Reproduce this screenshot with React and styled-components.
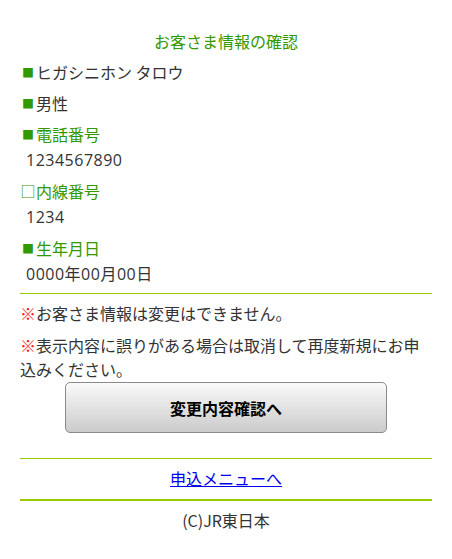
import React from 'react';
import styled, { createGlobalStyle } from 'styled-components';

const GlobalStyle = createGlobalStyle`
  body {
    margin: 0;
    background: #ffffff;
    font-family: "Noto Sans CJK JP", "Noto Sans", sans-serif;
    color: #333333;
  }
`

const Page = styled.div`
  width: 452px;
  padding: 30px 20px 0;
  box-sizing: border-box;
`

const Title = styled.h1`
  margin: 0 0 1px;
  font-size: 16px;
  font-weight: normal;
  line-height: 23px;
  text-align: center;
  color: #339900;
`

const Item = styled.div`
  margin-top: 7px;
`

const Label = styled.div`
  font-size: 16px;
  line-height: 24px;
  color: ${props => (props.green ? '#339900' : '#333333')};
`

const Bullet = styled.span`
  display: inline-block;
  width: 16px;
  font-size: ${props => (props.open ? '15px' : '12px')};
  line-height: 1;
  text-align: center;
  vertical-align: 1px;
  color: #339900;
`

const Value = styled.div`
  margin-top: 2px;
  padding-left: 6px;
  font-family: "Open Sans", "Noto Sans CJK JP", sans-serif;
  font-size: 16px;
  line-height: 24px;
  letter-spacing: 0.5px;
  color: #333333;
`

const Rule = styled.hr`
  margin: ${props => props.margin || '0'};
  border: none;
  height: ${props => props.thick ? '2px' : '1px'};
  background: #99cc00;
`

const Note = styled.p`
  margin: ${props => props.first ? '7px' : '8px'} 0 0;
  font-size: 16px;
  line-height: 24px;
  color: #333333;
`

const Mark = styled.span`
  color: #ff2222;
`

const ButtonRow = styled.div`
  display: flex;
  justify-content: center;
  margin-top: 1px;
`

const Button = styled.button`
  width: 322px;
  height: 51px;
  border: 1px solid #8a8a8a;
  border-radius: 5px;
  background: linear-gradient(#fafafa, #cbcbcb);
  font-family: "Noto Sans CJK JP", sans-serif;
  font-size: 16px;
  font-weight: bold;
  color: #000000;
`

const LinkRow = styled.div`
  margin-top: 7px;
  text-align: center;
  font-size: 16px;
  line-height: 24px;
`

const MenuLink = styled.a`
  color: #0000ee;
  text-decoration: underline;
`

const Footer = styled.div`
  margin-top: 7px;
  text-align: center;
  font-size: 16px;
  line-height: 24px;
  color: #333333;
`

const App = () => {
  return (
    <>
      <GlobalStyle />
      <Page>
        <Title>お客さま情報の確認</Title>
        <Item>
          <Label><Bullet>■</Bullet>ヒガシニホン タロウ</Label>
        </Item>
        <Item>
          <Label><Bullet>■</Bullet>男性</Label>
        </Item>
        <Item>
          <Label green><Bullet>■</Bullet>電話番号</Label>
          <Value>1234567890</Value>
        </Item>
        <Item>
          <Label green><Bullet open>□</Bullet>内線番号</Label>
          <Value>1234</Value>
        </Item>
        <Item>
          <Label green><Bullet>■</Bullet>生年月日</Label>
          <Value>0000年00月00日</Value>
        </Item>
        <Rule margin="7px 0 0" />
        <Note first><Mark>※</Mark>お客さま情報は変更はできません。</Note>
        <Note><Mark>※</Mark>表示内容に誤りがある場合は取消して再度新規にお申込みください。</Note>
        <ButtonRow>
          <Button>変更内容確認へ</Button>
        </ButtonRow>
        <Rule margin="25px 0 0" />
        <LinkRow>
          <MenuLink href="#">申込メニューへ</MenuLink>
        </LinkRow>
        <Rule margin="9px 0 0" thick />
        <Footer>(C)JR東日本</Footer>
      </Page>
    </>
  );
}

export default App;
